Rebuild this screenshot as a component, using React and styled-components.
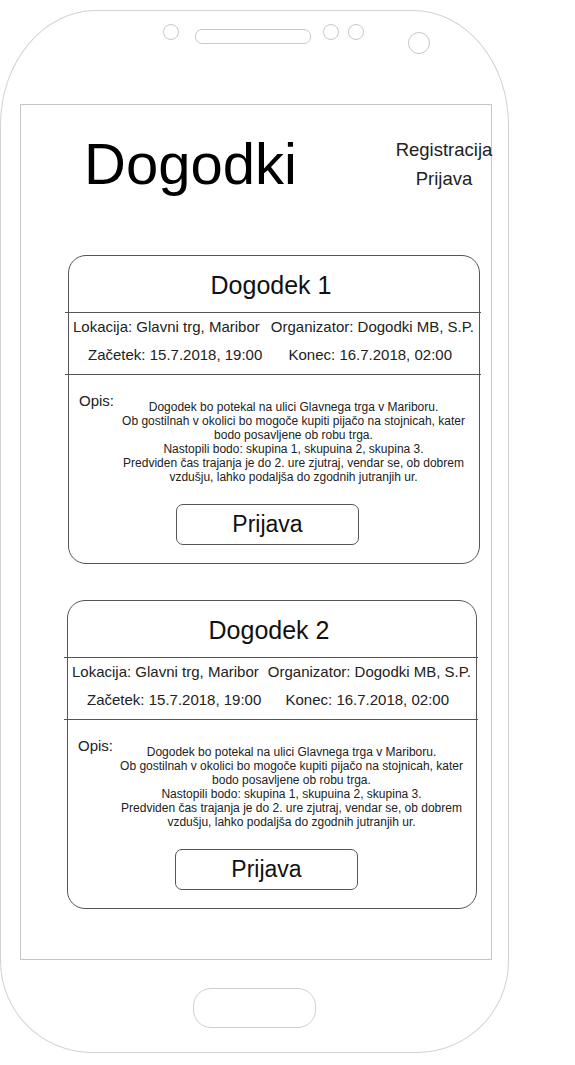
import styled, { createGlobalStyle } from 'styled-components';

const GlobalStyle = createGlobalStyle`
  html, body {
    margin: 0;
    padding: 0;
    background: #fff;
  }
  body {
    font-family: 'Liberation Sans', Arial, sans-serif;
    color: #111;
  }
`;

const Phone = styled.div`
  box-sizing: border-box;
  width: 509px;
  height: 1043px;
  margin-top: 10px;
  border: 1px solid #d2d2d2;
  border-radius: 96px 96px 92px 92px / 115px 115px 92px 92px;
  display: flex;
  flex-direction: column;
`;

const SensorBar = styled.div`
  display: flex;
  align-items: flex-start;
  padding: 13px 0 0 162px;
`;

const Sensor = styled.span`
  box-sizing: border-box;
  display: block;
  width: ${p => p.$w}px;
  height: ${p => p.$h}px;
  margin-top: ${p => p.$top || 0}px;
  margin-left: ${p => p.$gap || 0}px;
  border: 1px solid #c8c8c8;
  border-radius: ${p => (p.$pill ? '7px' : '50%')};
`;

const Screen = styled.div`
  box-sizing: border-box;
  width: 472px;
  height: 856px;
  margin: 50px 0 0 19px;
  border: 1px solid #c6c6c6;
  display: flex;
  flex-direction: column;
`;

const Header = styled.header`
  display: flex;
  align-items: flex-start;
  padding: 30px 0 0 63px;
`;

const Title = styled.h1`
  margin: 0;
  font-size: 58px;
  line-height: 1;
  font-weight: 400;
  color: #000;
`;

const Nav = styled.nav`
  margin-left: auto;
  width: 94px;
  display: flex;
  flex-direction: column;
  align-items: center;
  font-size: 18.5px;
  line-height: 29px;
  white-space: nowrap;
  color: #222;
`;

const CardList = styled.div`
  display: flex;
  flex-direction: column;
  gap: 36px;
  margin-top: 62px;
`;

const Card = styled.section`
  box-sizing: border-box;
  width: ${p => p.$width}px;
  margin-left: ${p => p.$left}px;
  border: 1px solid #555;
  border-radius: 18px;
  display: flex;
  flex-direction: column;
`;

const CardTitle = styled.h2`
  margin: 0;
  height: 56px;
  box-sizing: border-box;
  padding: 2px 6px 0 0;
  font-size: 25px;
  line-height: 54px;
  font-weight: 400;
  text-align: center;
  color: #111;
`;

const Divider = styled.div`
  height: 1px;
  background: #555;
  margin: 0 -2px 0 -4px;
`;

const Info = styled.div`
  padding-bottom: 5px;
`;

const InfoRow = styled.div`
  display: flex;
  justify-content: space-between;
  padding: 0 ${p => p.$right}px 0 ${p => p.$left}px;
  font-size: 15px;
  line-height: 28px;
  white-space: nowrap;
  color: #222;
`;

const Body = styled.div`
  display: flex;
  flex-direction: column;
  padding: 17px 10px 0 10px;
`;

const DescRow = styled.div`
  display: grid;
  grid-template-columns: 35px 1fr;
  column-gap: 4px;
`;

const Label = styled.span`
  font-size: 15px;
  line-height: 17px;
  color: #222;
`;

const Desc = styled.p`
  margin: 8px 0 0;
  font-size: 12px;
  line-height: 14px;
  text-align: center;
  color: #222;
`;

const Button = styled.button`
  box-sizing: border-box;
  width: 183px;
  height: 41px;
  margin: 20px 0 18px 97px;
  border: 1px solid #555;
  border-radius: 7px;
  background: #fff;
  font-family: inherit;
  font-size: 23px;
  color: #111;
  padding: 0;
`;

const HomeButton = styled.div`
  box-sizing: border-box;
  align-self: center;
  width: 123px;
  height: 40px;
  margin-top: 28px;
  border: 1px solid #d0d0d0;
  border-radius: 18px;
`;

const events = [
  { id: 1, name: 'Dogodek 1', left: 47, width: 412 },
  { id: 2, name: 'Dogodek 2', left: 46, width: 410 },
];

function EventCard({ name, left, width }) {
  return (
    <Card $left={left} $width={width}>
      <CardTitle>{name}</CardTitle>
      <Divider />
      <Info>
        <InfoRow $left={4} $right={5}>
          <span>Lokacija: Glavni trg, Maribor</span>
          <span>Organizator: Dogodki MB, S.P.</span>
        </InfoRow>
        <InfoRow $left={19} $right={27}>
          <span>Začetek: 15.7.2018, 19:00</span>
          <span>Konec: 16.7.2018, 02:00</span>
        </InfoRow>
      </Info>
      <Divider />
      <Body>
        <DescRow>
          <Label>Opis:</Label>
          <Desc>
            Dogodek bo potekal na ulici Glavnega trga v Mariboru.
            <br />
            Ob gostilnah v okolici bo mogoče kupiti pijačo na stojnicah, kater
            <br />
            bodo posavljene ob robu trga.
            <br />
            Nastopili bodo: skupina 1, skupuina 2, skupina 3.
            <br />
            Predviden čas trajanja je do 2. ure zjutraj, vendar se, ob dobrem
            <br />
            vzdušju, lahko podaljša do zgodnih jutranjih ur.
          </Desc>
        </DescRow>
        <Button type="button">Prijava</Button>
      </Body>
    </Card>
  );
}

export default function App() {
  return (
    <>
      <GlobalStyle />
      <Phone>
        <SensorBar>
          <Sensor $w={16} $h={16} />
          <Sensor $w={116} $h={15} $top={5} $gap={16} $pill />
          <Sensor $w={16} $h={16} $gap={12} />
          <Sensor $w={16} $h={16} $gap={9} />
          <Sensor $w={22} $h={22} $top={8} $gap={44} />
        </SensorBar>
        <Screen>
          <Header>
            <Title>Dogodki</Title>
            <Nav>
              <span>Registracija</span>
              <span>Prijava</span>
            </Nav>
          </Header>
          <CardList>
            {events.map(ev => (
              <EventCard key={ev.id} name={ev.name} left={ev.left} width={ev.width} />
            ))}
          </CardList>
        </Screen>
        <HomeButton />
      </Phone>
    </>
  );
}
